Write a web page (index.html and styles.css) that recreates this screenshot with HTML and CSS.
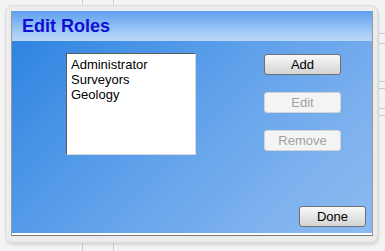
FILE: index.html
```html
<!DOCTYPE html>
<html lang="en">
<head>
    <meta charset="UTF-8">
    <title>Edit Roles</title>
    <link rel="stylesheet" href="styles.css">
</head>
<body>
    <div class="frame">
        <div class="dialog">
            <div class="title-bar">
                <h1>Edit Roles</h1>
            </div>
            <div class="content">
                <div class="main-row">
                    <ul class="role-list">
                        <li>Administrator</li>
                        <li>Surveyors</li>
                        <li>Geology</li>
                    </ul>
                    <div class="actions">
                        <button class="btn">Add</button>
                        <button class="btn" disabled>Edit</button>
                        <button class="btn" disabled>Remove</button>
                    </div>
                </div>
                <div class="footer">
                    <button class="btn done">Done</button>
                </div>
            </div>
        </div>
    </div>
</body>
</html>
```

FILE: styles.css
```css
body {
    margin: 0;
    width: 385px;
    height: 251px;
    font-family: "Liberation Sans", Arial, sans-serif;
    background-color: #f3f3f3;
    background-image:
        linear-gradient(to right, transparent 82px, #cfcfcf 82px, #cfcfcf 83px, transparent 83px),
        linear-gradient(to right, transparent 113px, #cfcfcf 113px, #cfcfcf 114px, transparent 114px),
        linear-gradient(to bottom,
            transparent 33px, #c8c8c8 33px, #c8c8c8 34px, transparent 34px,
            transparent 43px, #c8c8c8 43px, #c8c8c8 44px, transparent 44px,
            transparent 81px, #c8c8c8 81px, #c8c8c8 82px, transparent 82px,
            transparent 88px, #c8c8c8 88px, #c8c8c8 89px, transparent 89px,
            transparent 108px, #c8c8c8 108px, #c8c8c8 109px, transparent 109px,
            transparent 115px, #c8c8c8 115px, #c8c8c8 116px, transparent 116px);
    background-repeat: no-repeat;
    background-size: 100% 100%, 100% 100%, 6px 100%;
    background-position: 0 0, 0 0, right 0 top 0;
    overflow: hidden;
}
.frame {
    margin: 5px 0 0 5px;
    width: 373px;
    height: 238px;
    padding: 5px 6px 0 6px;
    background: #ececec;
    border: 1px solid #dcdcdc;
    border-radius: 7px;
    box-shadow: 1px 2px 3px rgba(0, 0, 0, 0.12);
    box-sizing: border-box;
}
.dialog {
    width: 360px;
    height: 224px;
    border-left: 1px solid #9a9a9a;
    border-right: 1px solid #9a9a9a;
    border-bottom: 1px solid #7a7a7a;
    margin-left: -1px;
    display: flex;
    flex-direction: column;
}
.title-bar {
    height: 30px;
    display: flex;
    align-items: center;
    padding-left: 10px;
    background: linear-gradient(to bottom, #5d9ff0, #a9cdf6 75%, #bcd8f8);
}
h1 {
    margin: 0;
    font-size: 18px;
    font-weight: bold;
    color: #0f0fd6;
}
.content {
    flex: 1;
    display: flex;
    flex-direction: column;
    padding-top: 12px;
    background: linear-gradient(135deg, #2e84e0 0%, #5a9eea 40%, #7cb0ee 75%, #8cbaf0 100%);
    border-bottom: 2px solid #ffffff;
}
.main-row {
    display: flex;
    padding-left: 54px;
}
.role-list {
    list-style: none;
    margin: 0;
    width: 130px;
    height: 102px;
    padding: 3px 4px;
    box-sizing: border-box;
    background: #ffffff;
    border-top: 1px solid #5a5a5a;
    border-left: 1px solid #5a5a5a;
    border-right: 1px solid #d8d8d8;
    border-bottom: 1px solid #d8d8d8;
    font-size: 13px;
    line-height: 15px;
    color: #000;
}
.actions {
    display: flex;
    flex-direction: column;
    gap: 17px;
    margin-left: 68px;
    padding-top: 1px;
}
.btn {
    width: 77px;
    height: 21px;
    padding: 0;
    font-family: "Liberation Sans", Arial, sans-serif;
    font-size: 13px;
    color: #000;
    background: linear-gradient(to bottom, #fafafa, #e6e6e6 50%, #d4d4d4);
    border: 1px solid #707070;
    border-radius: 3px;
}
.btn:disabled {
    color: #a2a2a2;
    background: #f4f4f4;
    border-color: #d4d4d4;
}
.footer {
    margin-top: auto;
    display: flex;
    justify-content: flex-end;
    padding: 0 6px 6px 0;
}
.done {
    width: 67px;
}
```
